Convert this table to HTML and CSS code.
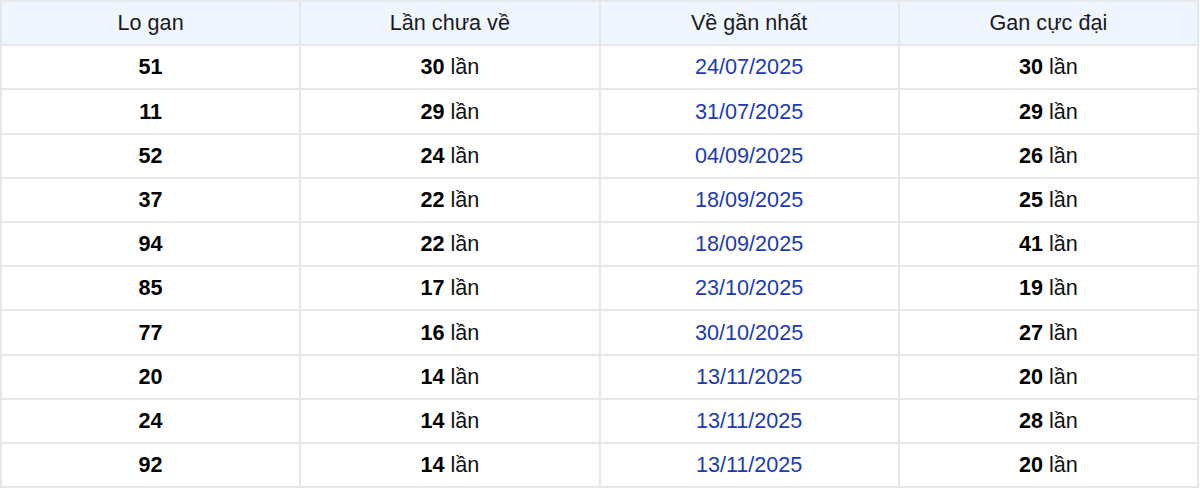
FILE: index.html
```html
<!DOCTYPE html>
<html lang="vi">
<head>
<meta charset="utf-8">
<link rel="stylesheet" href="styles.css">
</head>
<body>
<table class="gan">
<thead>
<tr><th>Lo gan</th><th>Lần chưa về</th><th>Về gần nhất</th><th>Gan cực đại</th></tr>
</thead>
<tbody>
<tr><td><b>51</b></td><td><b>30</b> lần</td><td class="date">24/07/2025</td><td><b>30</b> lần</td></tr>
<tr><td><b>11</b></td><td><b>29</b> lần</td><td class="date">31/07/2025</td><td><b>29</b> lần</td></tr>
<tr><td><b>52</b></td><td><b>24</b> lần</td><td class="date">04/09/2025</td><td><b>26</b> lần</td></tr>
<tr><td><b>37</b></td><td><b>22</b> lần</td><td class="date">18/09/2025</td><td><b>25</b> lần</td></tr>
<tr><td><b>94</b></td><td><b>22</b> lần</td><td class="date">18/09/2025</td><td><b>41</b> lần</td></tr>
<tr><td><b>85</b></td><td><b>17</b> lần</td><td class="date">23/10/2025</td><td><b>19</b> lần</td></tr>
<tr><td><b>77</b></td><td><b>16</b> lần</td><td class="date">30/10/2025</td><td><b>27</b> lần</td></tr>
<tr><td><b>20</b></td><td><b>14</b> lần</td><td class="date">13/11/2025</td><td><b>20</b> lần</td></tr>
<tr><td><b>24</b></td><td><b>14</b> lần</td><td class="date">13/11/2025</td><td><b>28</b> lần</td></tr>
<tr><td><b>92</b></td><td><b>14</b> lần</td><td class="date">13/11/2025</td><td><b>20</b> lần</td></tr>
</tbody>
</table>
</body>
</html>
```
FILE: styles.css
```css
html, body {
  margin: 0;
  padding: 0;
  background: #ffffff;
}
.gan {
  width: 1199px;
  border-collapse: collapse;
  table-layout: fixed;
  font-family: "Liberation Sans", Arial, sans-serif;
  font-size: 21.6px;
  color: #111111;
}
.gan th, .gan td {
  border: 2px solid #e5e7eb;
  text-align: center;
  vertical-align: middle;
  padding: 0;
  height: 42.2px;
  line-height: 1;
}
.gan th {
  background: #eff6ff;
  font-weight: normal;
  color: #1a1a1a;
}
.gan b {
  font-weight: bold;
  color: #000000;
}
.gan .date {
  color: #1a3ab8;
}
```
